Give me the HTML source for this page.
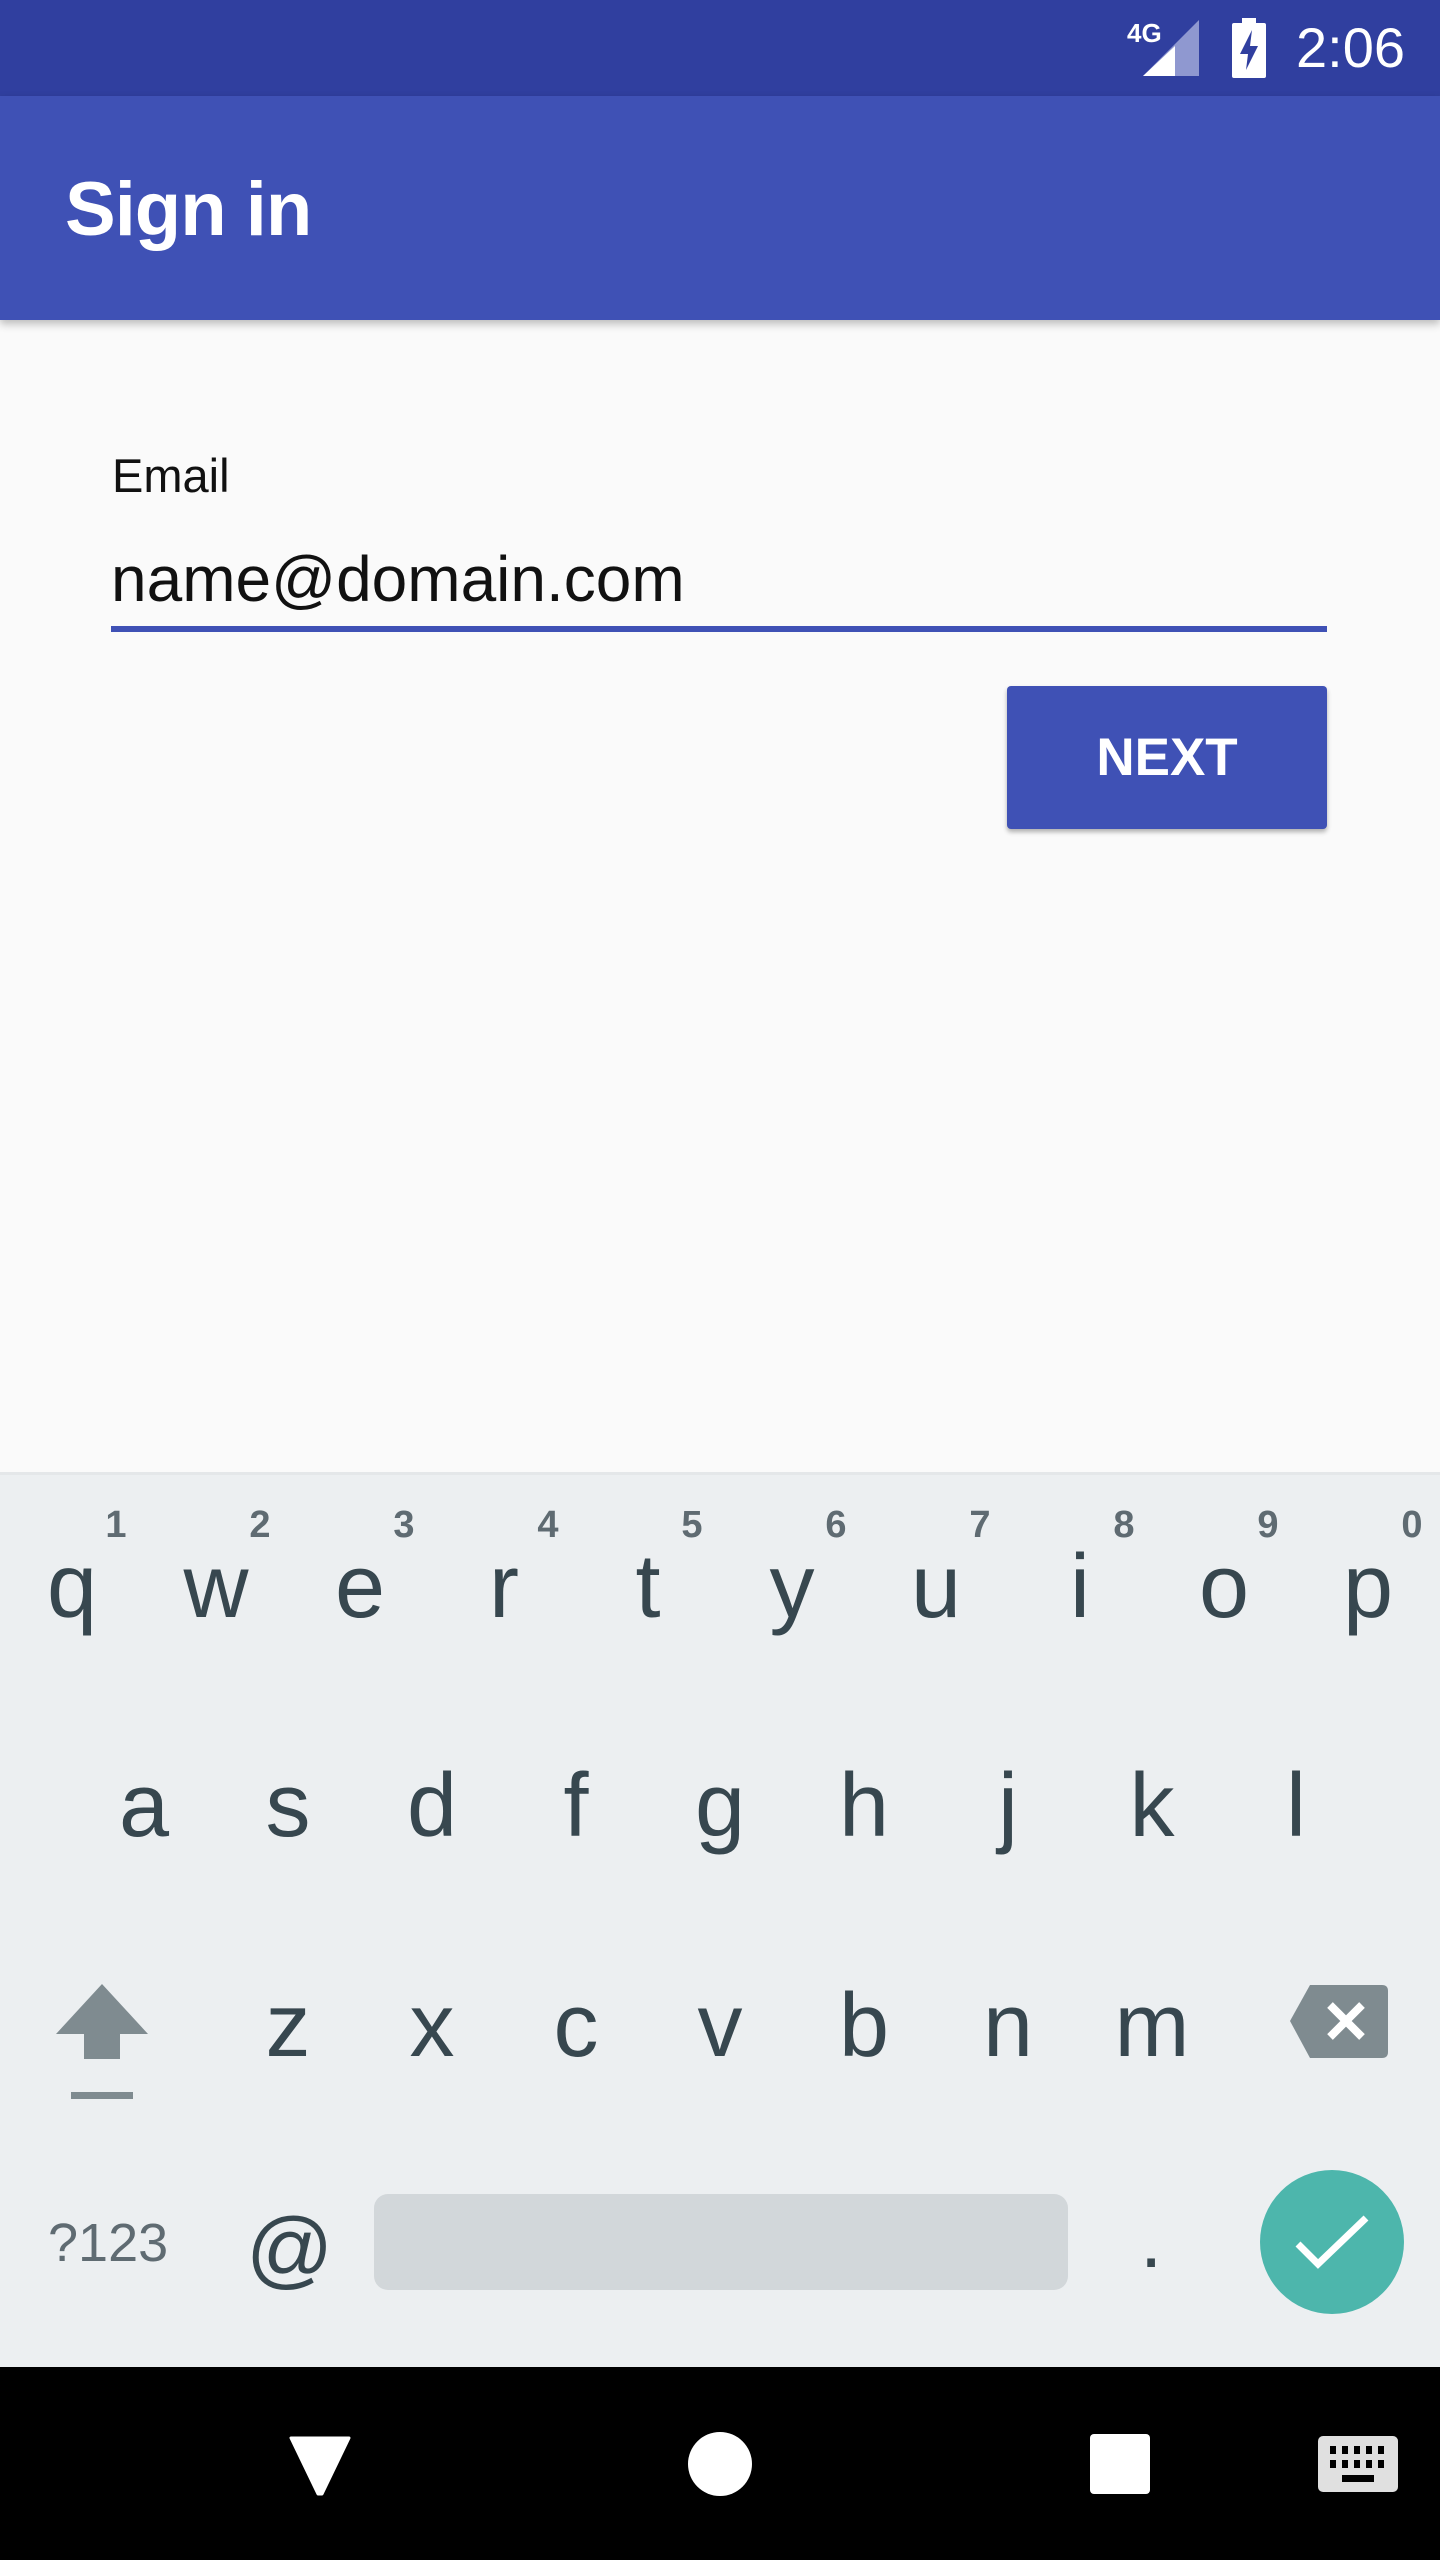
<!DOCTYPE html>
<html><head><meta charset="utf-8"><style>
*{margin:0;padding:0;box-sizing:border-box}
body{width:1440px;height:2560px;position:relative;background:#fafafa;font-family:"Liberation Sans",sans-serif;overflow:hidden}
.abs{position:absolute}
.k{position:absolute;width:144px;text-align:center;font-size:90px;color:#37474f;line-height:1}
.n{position:absolute;width:60px;text-align:center;font-size:38px;font-weight:bold;color:#5f6b72;line-height:1}
</style></head><body>
<div class="abs" style="left:0;top:0;width:1440px;height:96px;background:#303f9f"></div>
<svg class="abs" style="left:1125px;top:20px" width="74" height="56" viewBox="0 0 74 56"><polygon points="74,0 74,56 18,56" fill="#8f98d0"/><polygon points="50,26 50,56 18,56" fill="#fff"/><text x="2" y="22" font-size="26" font-weight="bold" fill="#fff" font-family="Liberation Sans">4G</text></svg>
<svg class="abs" style="left:1228px;top:18px" width="42" height="60" viewBox="0 0 42 60"><rect x="14" y="0" width="14" height="6" fill="#fff"/><rect x="4" y="5" width="34" height="55" rx="2" fill="#fff"/><polygon points="24,12 12,36 20,36 18,52 30,28 22,28" fill="#303f9f"/></svg>
<div class="abs" style="left:1296px;top:20px;font-size:56px;color:#fff;line-height:1">2:06</div>
<div class="abs" style="left:0;top:96px;width:1440px;height:224px;background:#3f51b5;box-shadow:0 4px 8px rgba(0,0,0,.25)"></div>
<div class="abs" style="left:65px;top:172px;font-size:76px;color:#fff;font-weight:bold;line-height:1;letter-spacing:-1px">Sign in</div>
<div class="abs" style="left:112px;top:452px;font-size:47px;color:#111;line-height:1">Email</div>
<div class="abs" style="left:111px;top:547px;font-size:64px;color:#111;line-height:1">name@domain.com</div>
<div class="abs" style="left:111px;top:626px;width:1216px;height:6px;background:#3f51b5"></div>
<div class="abs" style="left:1007px;top:686px;width:320px;height:143px;background:#3f51b5;border-radius:4px;box-shadow:0 3px 5px rgba(0,0,0,.3);color:#fff;font-size:53px;font-weight:bold;text-align:center;line-height:143px">NEXT</div>
<div class="abs" style="left:0;top:1472px;width:1440px;height:895px;background:#eceff1;border-top:3px solid #e4e7e9"></div>
<!-- row1 -->
<div class="k" style="left:0;top:1542px">q</div><div class="n" style="left:86px;top:1506px">1</div>
<div class="k" style="left:144px;top:1542px">w</div><div class="n" style="left:230px;top:1506px">2</div>
<div class="k" style="left:288px;top:1542px">e</div><div class="n" style="left:374px;top:1506px">3</div>
<div class="k" style="left:432px;top:1542px">r</div><div class="n" style="left:518px;top:1506px">4</div>
<div class="k" style="left:576px;top:1542px">t</div><div class="n" style="left:662px;top:1506px">5</div>
<div class="k" style="left:720px;top:1542px">y</div><div class="n" style="left:806px;top:1506px">6</div>
<div class="k" style="left:864px;top:1542px">u</div><div class="n" style="left:950px;top:1506px">7</div>
<div class="k" style="left:1008px;top:1542px">i</div><div class="n" style="left:1094px;top:1506px">8</div>
<div class="k" style="left:1152px;top:1542px">o</div><div class="n" style="left:1238px;top:1506px">9</div>
<div class="k" style="left:1296px;top:1542px">p</div><div class="n" style="left:1382px;top:1506px">0</div>
<!-- row2 -->
<div class="k" style="left:72px;top:1761px">a</div>
<div class="k" style="left:216px;top:1761px">s</div>
<div class="k" style="left:360px;top:1761px">d</div>
<div class="k" style="left:504px;top:1761px">f</div>
<div class="k" style="left:648px;top:1761px">g</div>
<div class="k" style="left:792px;top:1761px">h</div>
<div class="k" style="left:936px;top:1761px">j</div>
<div class="k" style="left:1080px;top:1761px">k</div>
<div class="k" style="left:1224px;top:1761px">l</div>
<!-- row3 -->
<div class="k" style="left:216px;top:1981px">z</div>
<div class="k" style="left:360px;top:1981px">x</div>
<div class="k" style="left:504px;top:1981px">c</div>
<div class="k" style="left:648px;top:1981px">v</div>
<div class="k" style="left:792px;top:1981px">b</div>
<div class="k" style="left:936px;top:1981px">n</div>
<div class="k" style="left:1080px;top:1981px">m</div>
<svg class="abs" style="left:52px;top:1984px" width="100" height="118" viewBox="0 0 100 118"><polygon points="50,0 96,50 68,50 68,75 32,75 32,50 4,50" fill="#7f8b90"/><rect x="19" y="108" width="62" height="7" fill="#7f8b90"/></svg>
<svg class="abs" style="left:1290px;top:1985px" width="98" height="73" viewBox="0 0 98 73"><path d="M20,0 H92 Q98,0 98,6 V67 Q98,73 92,73 H20 L0,36 Z" fill="#7f8b90"/><path d="M40,20 L72,52 M72,20 L40,52" stroke="#fff" stroke-width="8"/></svg>
<!-- row4 -->
<div class="abs" style="left:48px;top:2216px;font-size:54px;color:#5f6b72;line-height:1">?123</div>
<div class="abs" style="left:246px;top:2206px;font-size:86px;color:#37474f;line-height:1">@</div>
<div class="abs" style="left:374px;top:2194px;width:694px;height:96px;background:#d2d7da;border-radius:14px"></div>
<div class="abs" style="left:1140px;top:2200px;font-size:80px;color:#37474f;line-height:1">.</div>
<div class="abs" style="left:1260px;top:2170px;width:144px;height:144px;border-radius:50%;background:#4db6ac"></div>
<svg class="abs" style="left:1292px;top:2212px" width="80" height="62" viewBox="0 0 80 62"><path d="M6,32 L26,52 L74,6" stroke="#fff" stroke-width="7" fill="none"/></svg>
<!-- nav -->
<div class="abs" style="left:0;top:2367px;width:1440px;height:193px;background:#000"></div>
<svg class="abs" style="left:288px;top:2436px" width="64" height="60" viewBox="0 0 64 60"><path d="M3,2 H61 L34,58 H30 Z" fill="#fff" stroke="#fff" stroke-width="3" stroke-linejoin="round"/></svg>
<div class="abs" style="left:688px;top:2432px;width:64px;height:64px;border-radius:50%;background:#fff"></div>
<div class="abs" style="left:1090px;top:2434px;width:60px;height:60px;border-radius:4px;background:#fff"></div>
<svg class="abs" style="left:1318px;top:2436px" width="80" height="56" viewBox="0 0 80 56"><rect width="80" height="56" rx="5" fill="#e0e0e0"/><g fill="#000"><rect x="12" y="10" width="6" height="8"/><rect x="24" y="10" width="6" height="8"/><rect x="36" y="10" width="6" height="8"/><rect x="48" y="10" width="6" height="8"/><rect x="60" y="10" width="6" height="8"/><rect x="12" y="24" width="6" height="8"/><rect x="24" y="24" width="6" height="8"/><rect x="36" y="24" width="6" height="8"/><rect x="48" y="24" width="6" height="8"/><rect x="60" y="24" width="6" height="8"/><rect x="24" y="39" width="32" height="7"/></g></svg>
</body></html>
